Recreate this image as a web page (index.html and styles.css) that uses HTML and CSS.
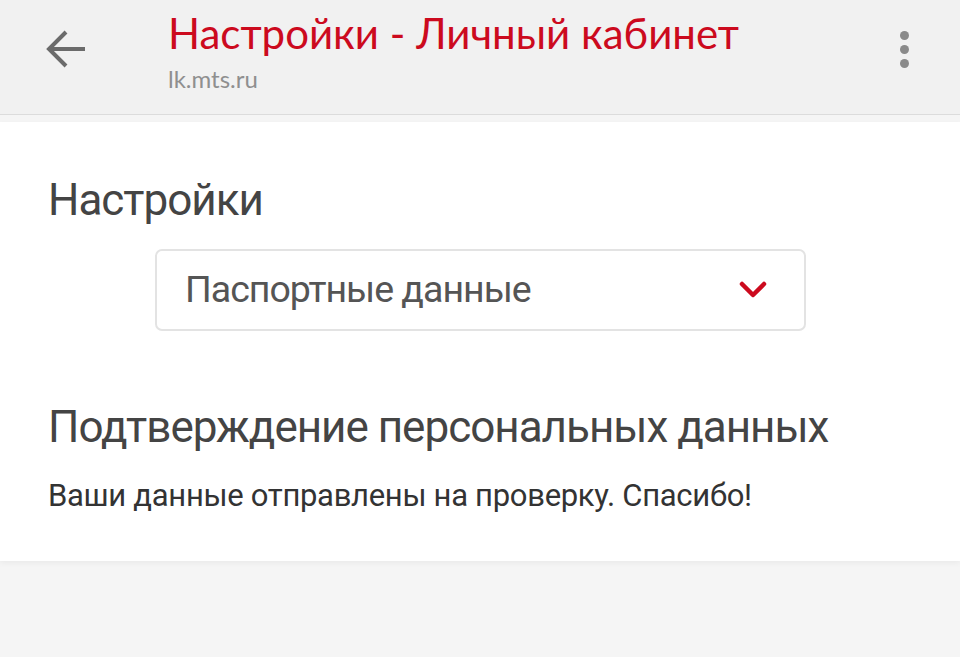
FILE: index.html
```html
<!DOCTYPE html>
<html lang="ru">
<head>
<meta charset="utf-8">
<title>Настройки - Личный кабинет</title>
<link rel="stylesheet" href="styles.css">
</head>
<body>
<header class="topbar">
  <button class="back" aria-label="Назад">
    <svg width="42" height="40" viewBox="0 0 42 40"><path d="M40 19H5M21 2L4 19l17 17" fill="none" stroke="#6b6b6b" stroke-width="4"/></svg>
  </button>
  <div class="titles">
    <div class="title">Настройки - Личный кабинет</div>
    <div class="url">lk.mts.ru</div>
  </div>
  <button class="menu" aria-label="Меню">
    <span class="dot"></span><span class="dot"></span><span class="dot"></span>
  </button>
</header>
<main class="page">
  <section class="card">
    <h1 class="heading first">Настройки</h1>
    <div class="select">
      <span class="select-text">Паспортные данные</span>
      <svg class="chevron" width="28" height="18" viewBox="0 0 28 18"><path d="M3 3l11 11L25 3" fill="none" stroke="#cc0a1e" stroke-width="4.5" stroke-linecap="round" stroke-linejoin="round"/></svg>
    </div>
    <h2 class="heading sub">Подтверждение персональных данных</h2>
    <p class="text">Ваши данные отправлены на проверку. Спасибо!</p>
  </section>
</main>
</body>
</html>
```
FILE: styles.css
```css
* { box-sizing: border-box; }
html, body { margin: 0; padding: 0; }
body {
  background: #f5f5f5;
  font-family: Roboto, "Noto Sans", sans-serif;
  color: #333;
  height: 657px;
  overflow: hidden;
}
.topbar {
  height: 115px;
  background: #f1f1f1;
  border-bottom: 1px solid #dcdcdc;
  display: flex;
  align-items: flex-start;
}
.back {
  background: none;
  border: 0;
  padding: 0;
  margin: 30px 0 0 45px;
  width: 42px;
  height: 40px;
  cursor: pointer;
}
.back svg { display: block; }
.titles {
  flex: 1;
  margin-left: 81px;
  font-family: Lato, "Noto Sans", sans-serif;
}
.title {
  color: #cc0a1e;
  font-size: 42px;
  line-height: 52px;
  margin-top: 7px;
  white-space: nowrap;
}
.url {
  color: #8f8f8f;
  font-size: 24px;
  line-height: 30px;
  margin-top: 5px;
}
.menu {
  background: none;
  border: 0;
  padding: 0;
  margin: 31px 51px 0 0;
  width: 9px;
  display: flex;
  flex-direction: column;
  gap: 5px;
}
.dot {
  width: 9px;
  height: 9px;
  border-radius: 50%;
  background: #8a8a8a;
}
.page {
  padding-top: 7px;
}
.card {
  background: #fff;
  padding: 50px 48px 0 48px;
  height: 439px;
  box-shadow: 0 2px 6px rgba(0,0,0,0.05);
  overflow: hidden;
}
.heading {
  margin: 0;
  font-weight: 400;
  font-size: 44px;
  letter-spacing: -1px;
  line-height: 56px;
  color: #444;
  white-space: nowrap;
}
.select {
  margin: 21px 0 0 107px;
  width: 651px;
  height: 82px;
  border: 2px solid #e3e3e3;
  border-radius: 7px;
  display: flex;
  align-items: center;
  justify-content: space-between;
  padding: 0 37px 0 28px;
}
.select-text {
  font-size: 37.5px;
  letter-spacing: -1px;
  line-height: 1;
  color: #555;
}
.chevron { display: block; }
.sub { margin-top: 68px; }
.text {
  margin: 21px 0 0;
  font-size: 31px;
  letter-spacing: -0.3px;
  line-height: 40px;
  color: #333;
  white-space: nowrap;
}
```
